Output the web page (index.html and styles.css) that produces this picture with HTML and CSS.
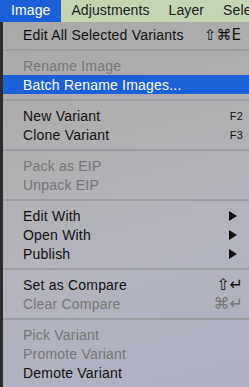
FILE: index.html
```html
<!DOCTYPE html>
<html lang="en">
  <head>
    <meta charset="UTF-8" />
    <title>Image Menu</title>
    <link rel="stylesheet" href="styles.css">
  </head>
  <body>
    <div class="menubar">
      <span class="bar-item active">Image</span>
      <span class="bar-item">Adjustments</span>
      <span class="bar-item">Layer</span>
      <span class="bar-item">Select</span>
    </div>

    <div class="menu">
      <div class="row"><span>Edit All Selected Variants</span><span class="key">&#8679;&#8984;E</span></div>
      <div class="sep"></div>
      <div class="row off"><span>Rename Image</span></div>
      <div class="row hot"><span>Batch Rename Images...</span></div>
      <div class="sep"></div>
      <div class="row"><span>New Variant</span><span class="fkey">F2</span></div>
      <div class="row"><span>Clone Variant</span><span class="fkey">F3</span></div>
      <div class="sep"></div>
      <div class="row off"><span>Pack as EIP</span></div>
      <div class="row off"><span>Unpack EIP</span></div>
      <div class="sep"></div>
      <div class="row"><span>Edit With</span><span class="arrow"></span></div>
      <div class="row"><span>Open With</span><span class="arrow"></span></div>
      <div class="row"><span>Publish</span><span class="arrow"></span></div>
      <div class="sep"></div>
      <div class="row"><span>Set as Compare</span><span class="key sym">&#8679;&#8629;</span></div>
      <div class="row off"><span>Clear Compare</span><span class="key sym">&#8984;&#8629;</span></div>
      <div class="sep"></div>
      <div class="row off"><span>Pick Variant</span></div>
      <div class="row off"><span>Promote Variant</span></div>
      <div class="row"><span>Demote Variant</span></div>
    </div>
  </body>
</html>
```

FILE: styles.css
```css
body {
  margin: 0;
  width: 249px;
  height: 387px;
  overflow: hidden;
  background: #2b2b2b;
  font-family: "Liberation Sans", Arial, sans-serif;
  font-size: 14px;
}
.menubar {
  display: flex;
  height: 22px;
  background: #c4d5b4;
  white-space: nowrap;
}
.bar-item {
  padding: 0 9px 0 10px;
  line-height: 21px;
  color: #1c1c1c;
  letter-spacing: 0.1px;
}
.bar-item.active {
  padding: 0 11px;
  background: #1b5fd9;
  color: #fff;
}
.menu {
  margin-left: 3px;
  padding-top: 3px;
  height: 362px;
  background: linear-gradient(165deg, #a9a9a9 0%, #b0b0b2 35%, #b3b4bd 60%, #aeb0c3 100%);
}
.row {
  display: flex;
  justify-content: space-between;
  align-items: center;
  height: 19px;
  padding: 0 6px 0 20px;
  color: #111;
  letter-spacing: 0.2px;
  white-space: nowrap;
}
.row.off {
  color: #767676;
}
.row.hot {
  background: #1b5fd9;
  color: #fff;
}
.sep {
  height: 2px;
  margin: 5px 0;
  background: #9c9da2;
}
.key {
  padding-right: 2px;
  font-family: "DejaVu Sans", sans-serif;
  font-size: 15px;
  letter-spacing: 0;
}
.key.sym {
  padding-right: 0;
  font-size: 16px;
}
.fkey {
  font-size: 11px;
}
.arrow {
  width: 0;
  height: 0;
  margin-right: 6px;
  border-top: 5px solid transparent;
  border-bottom: 5px solid transparent;
  border-left: 8px solid #111;
}
```
